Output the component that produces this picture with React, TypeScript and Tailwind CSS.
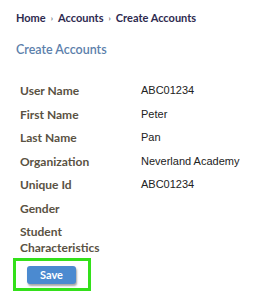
import React from 'react';

const rows: [string, string][] = [
  ['User Name', 'ABC01234'],
  ['First Name', 'Peter'],
  ['Last Name', 'Pan'],
  ['Organization', 'Neverland Academy'],
  ['Unique Id', 'ABC01234'],
  ['Gender', ''],
  ['Student Characteristics', ''],
];

export default function App() {
  return (
    <div className="h-[300px] w-[266px] bg-white font-['Lato',sans-serif]">
      <div className="flex items-center gap-[5px] pl-4 pt-[10px] text-[11px] font-bold text-[#2e2a4f]">
        <span>Home</span>
        <span className="text-[8px] text-gray-500">›</span>
        <span>Accounts</span>
        <span className="text-[8px] text-gray-500">›</span>
        <span>Create Accounts</span>
      </div>
      <h1 className="mt-[14px] pl-4 text-[12.5px] font-semibold text-[#5c80ab]">Create Accounts</h1>

      <div className="mt-[24px] flex flex-col pl-5">
        {rows.map(([label, value]) => (
          <div key={label} className="flex min-h-[23.5px] items-start">
            <div className="w-[121px] text-[12px] font-bold leading-[16px] text-[#5a5243]">{label}</div>
            <div className="font-['Liberation_Sans',Arial,sans-serif] text-[11px] leading-[15px] text-[#222]">{value}</div>
          </div>
        ))}
      </div>

      <div className="ml-[13px] mt-[2px] flex h-[33px] w-[78px] items-center border-[3px] border-[#33e01a] pl-[11px]">
        <button className="h-[18px] w-[49px] rounded-[3px] bg-[#4b8ad0] text-[11px] font-bold text-white shadow-[1px_2px_2px_rgba(0,0,0,0.35)]">
          Save
        </button>
      </div>
    </div>
  );
}
